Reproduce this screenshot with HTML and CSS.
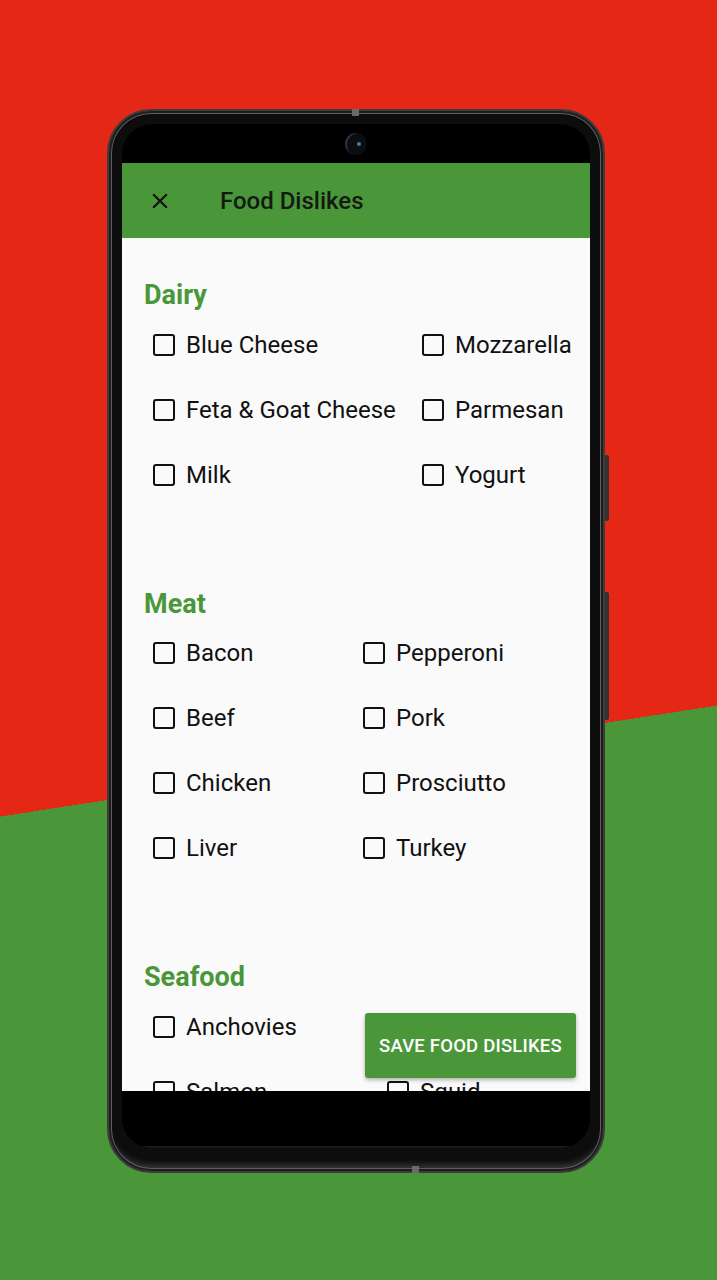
FILE: index.html
```html
<!DOCTYPE html>
<html lang="en">
<head>
    <meta charset="UTF-8">
    <meta name="viewport" content="width=device-width, initial-scale=1.0">
    <title>Food Dislikes</title>
    <link rel="stylesheet" href="styles.css">
</head>
<body>
    <div class="phone">
        <span class="notch notch-top"></span>
        <span class="notch notch-bottom"></span>
        <span class="side-btn btn-power"></span>
        <span class="side-btn btn-volume"></span>

        <div class="screen">
            <div class="status-bar"><span class="camera"></span></div>

            <header class="app-bar">
                <svg class="close" width="24" height="24" viewBox="0 0 24 24">
                    <path d="M19 6.41L17.59 5 12 10.59 6.41 5 5 6.41 10.59 12 5 17.59 6.41 19 12 13.41 17.59 19 19 17.59 13.41 12z" fill="#111"/>
                </svg>
                <h1>Food Dislikes</h1>
            </header>

            <main class="content">
                <section class="group dairy">
                    <h2>Dairy</h2>
                    <div class="options">
                        <label class="option"><span class="box"></span>Blue Cheese</label>
                        <label class="option"><span class="box"></span>Mozzarella</label>
                        <label class="option"><span class="box"></span>Feta &amp; Goat Cheese</label>
                        <label class="option"><span class="box"></span>Parmesan</label>
                        <label class="option"><span class="box"></span>Milk</label>
                        <label class="option"><span class="box"></span>Yogurt</label>
                    </div>
                </section>

                <section class="group meat">
                    <h2>Meat</h2>
                    <div class="options">
                        <label class="option"><span class="box"></span>Bacon</label>
                        <label class="option"><span class="box"></span>Pepperoni</label>
                        <label class="option"><span class="box"></span>Beef</label>
                        <label class="option"><span class="box"></span>Pork</label>
                        <label class="option"><span class="box"></span>Chicken</label>
                        <label class="option"><span class="box"></span>Prosciutto</label>
                        <label class="option"><span class="box"></span>Liver</label>
                        <label class="option"><span class="box"></span>Turkey</label>
                    </div>
                </section>

                <section class="group seafood">
                    <h2>Seafood</h2>
                    <div class="options">
                        <label class="option"><span class="box"></span>Anchovies</label>
                        <label class="option"><span class="box"></span>Shrimp</label>
                        <label class="option"><span class="box"></span>Salmon</label>
                        <label class="option"><span class="box"></span>Squid</label>
                    </div>
                </section>

                <button class="save">SAVE FOOD DISLIKES</button>
            </main>

            <div class="nav-bar"></div>
        </div>
    </div>
</body>
</html>
```

FILE: styles.css
```css
html, body { margin: 0; padding: 0; }
body {
    height: 1280px; overflow: hidden;
    font-family: Roboto, "Liberation Sans", sans-serif;
    background: linear-gradient(171.2deg, #e52815 807px, #4a973a 807px);
    padding: 109px 0 0 107px; box-sizing: border-box;
}

/* phone shell */
.phone {
    position: relative; width: 498px; height: 1064px; box-sizing: border-box;
    padding: 13px 13px 23px 13px;
    background: #0d0d0d; border: 2px solid #3c3c3c; border-radius: 44px;
    box-shadow: inset 0 0 0 2px #1c1c1c, inset 0 0 0 3px #5e5e5e, inset 0 -10px 6px -4px #3a3a3a;
}
.notch { position: absolute; width: 7px; height: 7px; background: #6a6a6a; }
.notch-top { top: -2px; left: 243px; }
.notch-bottom { bottom: -2px; left: 303px; }
.side-btn { position: absolute; right: -6px; width: 4px; background: #333; border-radius: 0 2px 2px 0; }
.btn-power { top: 344px; height: 66px; }
.btn-volume { top: 481px; height: 128px; }

.screen {
    height: 100%; background: #000; border-radius: 30px; overflow: hidden;
    display: flex; flex-direction: column;
}
.status-bar { height: 39px; display: flex; justify-content: center; align-items: center; flex-shrink: 0; }
.camera {
    width: 22px; height: 22px; border-radius: 50%; background: #0b0d12;
    box-shadow: inset 3px 1px 0 -1px #2a3340; position: relative;
}
.camera::after {
    content: ""; position: absolute; left: 12px; top: 9px; width: 4px; height: 4px;
    border-radius: 50%; background: #3f7fb0;
}

/* app bar */
.app-bar {
    height: 75px; flex-shrink: 0; background: #4a973a;
    display: flex; align-items: center; padding-left: 25px;
}
.close { width: 26px; height: 26px; }
.app-bar h1 { margin: 0 0 0 47px; font-size: 24px; font-weight: 500; color: #141a12; }

/* list */
.content {
    position: relative; flex-grow: 1; overflow: hidden;
    background: #fafafa; padding: 40px 0 0 22px;
}
.group + .group { margin-top: 79.5px; }
.group h2 { margin: 0; font-size: 27px; line-height: 34px; font-weight: 700; color: #4a973a; }
.options { display: grid; }
.dairy .options { grid-template-columns: 269px auto; }
.meat .options { grid-template-columns: 210px auto; }
.seafood .options { grid-template-columns: 234px auto; }
.option {
    height: 65px; display: flex; align-items: center;
    font-size: 24px; color: #111; white-space: nowrap;
}
.box {
    width: 18px; height: 18px; border: 2.5px solid #111; border-radius: 3px;
    margin: 0 11px 0 9px; flex-shrink: 0;
}

.save {
    position: absolute; right: 14px; bottom: 13px; width: 211px; height: 65px;
    border: none; border-radius: 3px; background: #4a973a; color: #fff;
    font-family: Roboto, "Liberation Sans", sans-serif; font-size: 18.5px; font-weight: 500;
    letter-spacing: 0.2px; box-shadow: 0 2px 4px rgba(0, 0, 0, 0.3);
}

.nav-bar { height: 57px; flex-shrink: 0; background: #000; box-shadow: inset 0 -2px 0 #1a1a1a; }
```
